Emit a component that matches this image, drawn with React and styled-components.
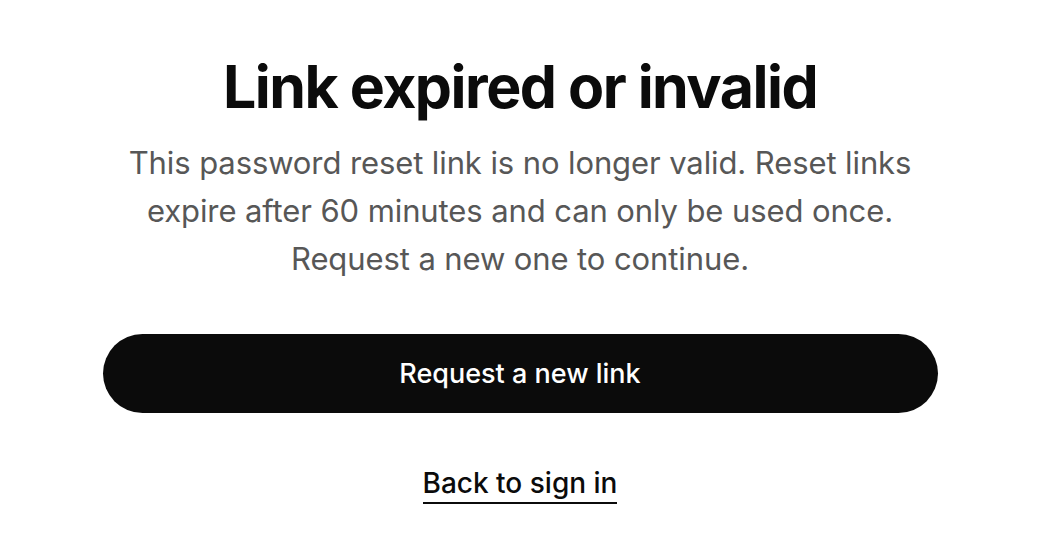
import React from 'react';
import styled, { createGlobalStyle } from 'styled-components';

const GlobalStyle = createGlobalStyle`
  html, body {
    margin: 0;
    padding: 0;
    background: #ffffff;
  }
  body {
    font-family: Inter, "Noto Sans", "Liberation Sans", sans-serif;
    -webkit-font-smoothing: antialiased;
  }
`;

const Page = styled.div`
  width: 1040px;
  height: 556px;
  display: flex;
  justify-content: center;
  box-sizing: border-box;
  padding-top: 50px;
`;

const Card = styled.div`
  width: 835px;
  display: flex;
  flex-direction: column;
  align-items: center;
`;

const Title = styled.h1`
  margin: 0;
  font-size: 59px;
  font-weight: 700;
  letter-spacing: -1.5px;
  line-height: 74px;
  color: #0b0b0b;
`;

const Message = styled.p`
  margin: 15px 0 0;
  font-size: 31px;
  line-height: 48px;
  color: #575757;
  text-align: center;
  letter-spacing: -0.1px;
`;

const PrimaryButton = styled.button`
  margin-top: 51px;
  width: 100%;
  height: 79px;
  border: none;
  border-radius: 40px;
  background: #0b0b0b;
  color: #ffffff;
  font-family: inherit;
  font-size: 27px;
  font-weight: 500;
  cursor: pointer;
`;

const BackLink = styled.a`
  margin-top: 53px;
  font-size: 28px;
  font-weight: 500;
  color: #0b0b0b;
  text-decoration: none;
  border-bottom: 2px solid #0b0b0b;
  line-height: 34px;
  padding-bottom: 2px;
`;

export default function App() {
  return (
    <>
      <GlobalStyle />
      <Page>
        <Card>
          <Title>Link expired or invalid</Title>
          <Message>
            This password reset link is no longer valid. Reset links
            <br />
            expire after 60 minutes and can only be used once.
            <br />
            Request a new one to continue.
          </Message>
          <PrimaryButton type="button">Request a new link</PrimaryButton>
          <BackLink href="#">Back to sign in</BackLink>
        </Card>
      </Page>
    </>
  );
}
